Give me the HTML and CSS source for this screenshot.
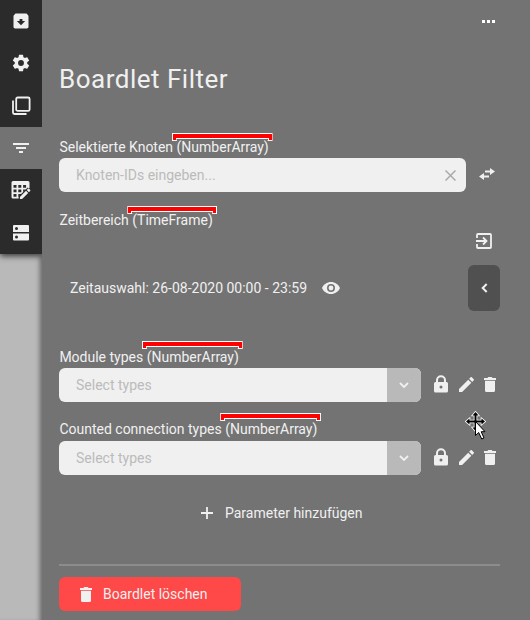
FILE: index.html
```html
<!DOCTYPE html>
<html lang="de">
<head>
<meta charset="utf-8">
<title>Boardlet Filter</title>
<link rel="stylesheet" href="styles.css">
</head>
<body>
<svg class="defs" aria-hidden="true">
  <symbol id="lock" viewBox="0 0 14 18"><path fill-rule="evenodd" d="M1.500 7H2V5.200a5 5 0 0 1 10 0V7h.5A1.500 1.500 0 0 1 14 8.500V16a1.500 1.500 0 0 1-1.500 1.500h-11A1.500 1.500 0 0 1 0 16V8.500A1.500 1.500 0 0 1 1.500 7zM4 7h6V5.200a3 3 0 0 0-6 0zm3 3.500a1.500 1.500 0 1 0 0 3 1.500 1.500 0 0 0 0-3z"/></symbol>
  <symbol id="pencil" viewBox="3 3 18 18"><path d="M3 17.250V21h3.750L17.810 9.940l-3.750-3.750zM20.710 7.040a1 1 0 0 0 0-1.410l-2.340-2.340a1 1 0 0 0-1.410 0l-1.830 1.830 3.750 3.750z"/></symbol>
  <symbol id="trash" viewBox="0 0 12 15"><path d="M1 3.700h10v9.800a1.500 1.500 0 0 1-1.500 1.500h-7A1.500 1.500 0 0 1 1 13.500zM0 1h3.500l.7-1h3.600l.7 1H12v2H0z"/></symbol>
  <symbol id="chevron" viewBox="0 0 10 7"><path class="line" d="M1 1l4 4 4-4" stroke-width="1.800"/></symbol>
</svg>
<div class="app">
  <nav class="rail">
    <div class="menu">
      <a class="item"><svg width="20" height="20" viewBox="0 0 24 24"><path fill-rule="evenodd" d="M20.540 5.230l-1.390-1.680C18.880 3.210 18.470 3 18 3H6c-.470 0-.880.210-1.160.550L3.460 5.230C3.170 5.570 3 6.020 3 6.500V19c0 1.100.9 2 2 2h14c1.100 0 2-.9 2-2V6.500c0-.480-.170-.930-.460-1.270zM12 17L7 12h3.300V9.500h3.400V12H17z"/></svg></a>
      <a class="item"><svg width="20" height="20" viewBox="0 0 24 24"><path d="M19.430 12.980c.040-.320.070-.640.070-.980s-.030-.660-.070-.980l2.110-1.650c.190-.150.240-.420.120-.640l-2-3.460c-.120-.220-.390-.300-.610-.220l-2.490 1c-.520-.400-1.080-.730-1.690-.980l-.380-2.650A.488.488 0 0 0 14 2h-4c-.250 0-.460.180-.490.420l-.380 2.650c-.610.250-1.170.590-1.690.980l-2.490-1c-.230-.090-.490 0-.610.220l-2 3.460c-.130.220-.070.490.120.640l2.110 1.650c-.040.320-.070.650-.070.980s.030.660.070.980l-2.110 1.650c-.190.150-.240.420-.120.640l2 3.460c.120.220.390.300.610.220l2.490-1c.520.400 1.080.730 1.690.980l.380 2.650c.030.240.240.420.490.420h4c.250 0 .460-.180.490-.420l.380-2.650c.610-.250 1.170-.590 1.690-.980l2.490 1c.230.090.490 0 .610-.220l2-3.460c.120-.220.070-.490-.120-.640zM12 15.500a3.500 3.500 0 1 1 0-7 3.500 3.500 0 0 1 0 7z"/></svg></a>
      <a class="item"><svg class="line" width="20" height="20" viewBox="0 0 20 20" stroke-width="1.800"><rect x="5.200" y="1.500" width="13.400" height="13.400" rx="1.500"/><path d="M2 4.500v12A1.500 1.500 0 0 0 3.500 18h12"/></svg></a>
      <a class="item active"><svg width="16" height="10" viewBox="0 0 16 10"><path d="M0 0h16v2H0zM3 4h10v2H3zM6 8h4v2H6z"/></svg></a>
      <a class="item"><svg width="20" height="20" viewBox="0 0 20 20"><path fill-rule="evenodd" d="M2 1h15a1.500 1.500 0 0 1 1.500 1.500V8l-8 8-1 2.500H2A1.500 1.500 0 0 1 .5 17V2.500A1.500 1.500 0 0 1 2 1zM2.500 5v2.800h3V5zm4.800 0v2.800h3V5zm4.800 0v2.800h3V5zM2.500 9.500v2.800h3V9.500zm4.800 0v2.800h3V9.500zm4.800 0v2.800l3-2.800zM2.500 14v2.800h3V14zm4.800 0v2.800h2l1-2.800z"/><path d="M7.600 16.500l9.200-9.100 3.200 3.200-9.200 9.100H7.600z" fill="#2b2b2b"/><path d="M8.900 16.900l6.100-6.100 2.200 2.200-6.100 6.100H8.900zM15.700 10.100l1.300-1.300a.8.8 0 0 1 1.100 0l1.100 1.100a.8.8 0 0 1 0 1.100l-1.300 1.300z"/></svg></a>
      <a class="item"><svg width="16" height="16" viewBox="0 0 16 16"><path fill-rule="evenodd" d="M1 0h14a1 1 0 0 1 1 1v6H0V1a1 1 0 0 1 1-1zm2.500 2a1.500 1.500 0 1 0 0 3 1.500 1.500 0 0 0 0-3zM0 8.500h16v6a1 1 0 0 1-1 1H1a1 1 0 0 1-1-1zm3.500 2a1.500 1.500 0 1 0 0 3 1.500 1.500 0 0 0 0-3z"/></svg></a>
    </div>
  </nav>
  <main class="panel">
    <div class="more"><i></i><i></i><i></i></div>
    <h1>Boardlet Filter</h1>

    <div class="label">Selektierte Knoten <span class="type">(NumberArray)<b class="mark"></b></span></div>
    <div class="row">
      <div class="input nodes"><span>Knoten-IDs eingeben...</span><svg width="11" height="11" viewBox="0 0 11 11"><path d="M.5.5l10 10m0-10l-10 10" stroke="#aaa" stroke-width="1.500"/></svg></div>
      <svg class="swap" width="16" height="12" viewBox="0 0 16 12"><path d="M6 2.500h5V0l5 3.500L11 7V4.500H6zM10 9.500H5V12L0 8.500 5 5v2.500h5z"/></svg>
    </div>

    <div class="label time">Zeitbereich <span class="type frame">(TimeFrame)<b class="mark"></b></span></div>
    <div class="export"><svg class="line" width="16" height="16" viewBox="0 0 16 16" stroke-width="1.800"><path d="M1 5V2a1 1 0 0 1 1-1h12a1 1 0 0 1 1 1v12a1 1 0 0 1-1 1H2a1 1 0 0 1-1-1v-3M0 8h10M7 4.500L10.500 8 7 11.500"/></svg></div>
    <div class="period">
      <span>Zeitauswahl: 26-08-2020 00:00 - 23:59</span>
      <svg width="18" height="12" viewBox="0 0 18 12"><path fill-rule="evenodd" d="M9 0c4 0 7.500 2.500 9 6-1.500 3.500-5 6-9 6S1.500 9.500 0 6c1.500-3.500 5-6 9-6zm0 2a4 4 0 1 0 0 8 4 4 0 0 0 0-8zm0 1.600a2.400 2.400 0 1 1 0 4.800 2.400 2.400 0 0 1 0-4.800z"/></svg>
      <button class="toggle"><svg width="7" height="10" viewBox="0 0 7 10"><path class="line" d="M5.700 1l-4 4 4 4" stroke-width="2"/></svg></button>
    </div>

    <div class="label module">Module types <span class="type">(NumberArray)<b class="mark"></b></span></div>
    <div class="row">
      <div class="input select"><span>Select types</span><i class="drop"><svg width="10" height="7"><use href="#chevron"/></svg></i></div>
      <svg class="lock" width="14" height="18"><use href="#lock"/></svg><svg class="pencil" width="15" height="15"><use href="#pencil"/></svg><svg class="trash" width="12" height="15"><use href="#trash"/></svg>
    </div>

    <div class="label counted">Counted connection types <span class="type">(NumberArray)<b class="mark"></b></span></div>
    <div class="row last">
      <div class="input select"><span>Select types</span><i class="drop"><svg width="10" height="7"><use href="#chevron"/></svg></i></div>
      <svg class="lock" width="14" height="18"><use href="#lock"/></svg><svg class="pencil" width="15" height="15"><use href="#pencil"/></svg><svg class="trash" width="12" height="15"><use href="#trash"/></svg>
    </div>

    <div class="add"><svg width="12" height="12" viewBox="0 0 12 12"><path d="M5.100 0h1.800v5.100H12v1.800H6.900V12H5.100V6.900H0V5.100h5.100z"/></svg><span>Parameter hinzufügen</span></div>
    <hr>
    <button class="delete"><svg width="12" height="15"><use href="#trash"/></svg><span>Boardlet löschen</span></button>
  </main>
  <svg class="cursor" width="22" height="30" viewBox="-1 -1 22 30">
    <path class="move" d="M9.500 0l3 3.500h-2V8.500h5v-2l3.500 3-3.500 3v-2h-5v5h2l-3 3.500-3-3.500h2v-5h-5v2L0 9.500l3.500-3v2h5v-5h-2z"/>
    <path class="pointer" d="M9.500 9.500v14l3.200-3 3 6.500 2.300-1-2.800-6.300H19z"/>
  </svg>
</div>
</body>
</html>
```
FILE: styles.css
```css
* { box-sizing: border-box; }
body {
  margin: 0;
  font: 14px/20px Roboto, sans-serif;
  color: #f0f0f0;
}
svg { display: block; fill: #f0f0f0; flex: none; }
.line { fill: none; stroke: #f0f0f0; }
.defs { display: none; }
.app { position: relative; display: flex; width: 530px; height: 620px; overflow: hidden; background: #737373; }

.rail { width: 42px; background: #b9b9b9; box-shadow: inset -5px 0 5px -3px #666; }
.menu { height: 254px; background: #2b2b2b; box-shadow: 0 2px 6px #333; clip-path: inset(0 0 -12px 0); }
.item { display: flex; height: 42.3px; align-items: center; justify-content: center; }
.item.active { background: #737373; }

.panel { flex: 1; padding: 20px 30px 0 17px; }
.more { display: flex; height: 4px; gap: 2px; justify-content: flex-end; padding-right: 5px; }
.more i { width: 3px; height: 3px; background: #fff; }
h1 { margin: 37px 0 0; font-size: 26px; line-height: 36px; font-weight: 400; letter-spacing: .5px; }

.label { height: 20px; margin-top: 40px; padding-left: .4px; white-space: nowrap; }
.type { position: relative; display: inline-block; }
.mark {
  position: absolute;
  left: -5px;
  top: -4px;
  width: 101px;
  height: 8px;
  background: #f00;
  border: 1px solid #fff;
  clip-path: polygon(0 0, 100% 0, 100% 100%, calc(100% - 5px) 100%, calc(100% - 5px) 6px, 5px 6px, 5px 100%, 0 100%);
}
.mark::after { content: ""; position: absolute; inset: 4px 3px -1px; border: 1px solid #fff; border-bottom: 0; }
.frame .mark { width: 90px; }
.module .mark, .counted .mark { top: -6px; }

.row { display: flex; height: 34px; margin-top: 1px; align-items: center; }
.row.last { margin-top: 2px; }
.input {
  display: flex;
  height: 34px;
  align-items: center;
  justify-content: space-between;
  padding-left: 17px;
  border-radius: 6px;
  overflow: hidden;
  background: #f0f0f0;
  color: #bbb;
}
.nodes { width: 407px; padding-right: 10px; }
.swap { margin: -3px 0 0 13px; }
.label.time { margin-top: 18px; }
.export { display: flex; justify-content: flex-end; height: 16px; margin-top: 3px; padding-right: 8px; }
.period { display: flex; height: 46px; margin-top: 16px; padding-left: 11px; align-items: center; }
.period svg { margin-left: 15px; }
.toggle { width: 32px; height: 46px; margin-left: auto; padding: 0; border: 0; border-radius: 6px; background: #505050; }
.period .toggle svg { margin: 0 0 0 13px; }
.label.module { margin-top: 36px; }
.label.counted { margin-top: 17px; }
.select { width: 362px; }
.drop { display: flex; width: 34px; height: 34px; align-items: center; justify-content: center; background: #b9b9b9; }
.lock { margin: -3px 0 0 13px; }
.pencil { margin: -2px 0 0 11px; }
.trash { margin: -2px 0 0 10px; }

.add { display: flex; height: 20px; margin: 28px 0 0 142px; align-items: center; gap: 12px; }
hr { height: 2px; margin: 41px 0 11px; border: 0; background: #8c8c8c; }
.delete {
  display: flex;
  width: 182px;
  height: 34px;
  padding: 0 0 0 21px;
  align-items: center;
  gap: 11px;
  border: 0;
  border-radius: 6px;
  background: #ff4848;
  color: #f0f0f0;
  font: inherit;
}
.cursor { position: absolute; left: 465px; top: 411px; }
.move { fill: #000; stroke: #fff; stroke-width: 1.6px; paint-order: stroke; }
.pointer { fill: #fff; stroke: #000; }
```
